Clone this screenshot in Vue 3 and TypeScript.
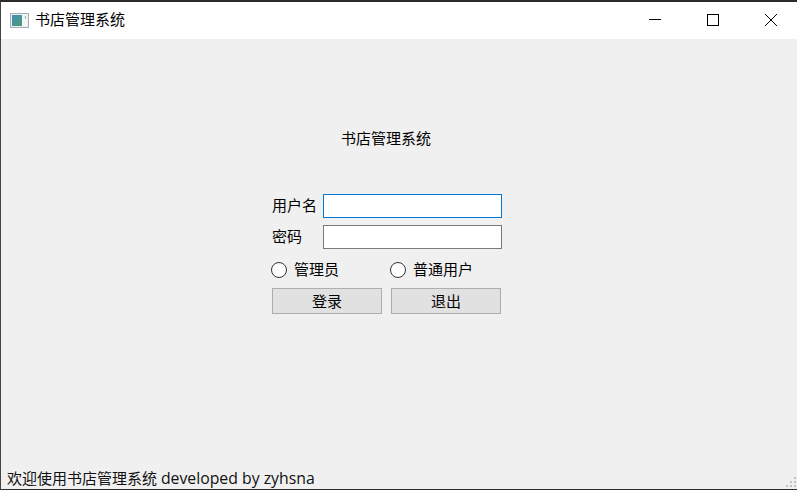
<script setup lang="ts">
const title = '书店管理系统'
</script>

<template>
  <div class="window">
    <header class="titlebar">
      <svg class="app-icon" width="20" height="16" viewBox="0 0 20 16">
        <defs>
          <linearGradient id="pane" x1="0" y1="0" x2="1" y2="1">
            <stop offset="0" stop-color="#3f8fb5" />
            <stop offset="1" stop-color="#4f9a78" />
          </linearGradient>
        </defs>
        <rect x="0.5" y="0.5" width="18" height="14" fill="#eef0f2" stroke="#a9adb3" />
        <rect x="2" y="2" width="10" height="11" fill="url(#pane)" />
        <rect x="12" y="2" width="5" height="11" fill="#f4f6f6" />
        <rect x="15" y="3" width="1" height="3" fill="#7fc0a8" />
      </svg>
      <span class="title">{{ title }}</span>
      <div class="controls">
        <button class="ctl" aria-label="最小化">
          <svg width="12" height="12" viewBox="0 0 12 12"><path d="M0 5.5H12" stroke="#000" fill="none" /></svg>
        </button>
        <button class="ctl" aria-label="最大化">
          <svg width="12" height="12" viewBox="0 0 12 12"><rect x="0.5" y="0.5" width="11" height="11" stroke="#000" fill="none" /></svg>
        </button>
        <button class="ctl" aria-label="关闭">
          <svg width="12" height="12" viewBox="0 0 12 12"><path d="M0 0L12 12M12 0L0 12" stroke="#000" fill="none" /></svg>
        </button>
      </div>
    </header>

    <main class="content">
      <div class="panel">
        <h1 class="heading">{{ title }}</h1>
        <form class="form" @submit.prevent>
          <div class="row">
            <label class="label">用户名</label>
            <input class="input focused" type="text" />
          </div>
          <div class="row row-pw">
            <label class="label">密码</label>
            <input class="input" type="password" />
          </div>
          <div class="radios">
            <label class="radio radio-a"><span class="dot"></span><span class="radio-text">管理员</span></label>
            <label class="radio"><span class="dot"></span><span class="radio-text">普通用户</span></label>
          </div>
          <div class="buttons">
            <button class="btn" type="button">登录</button>
            <button class="btn" type="button">退出</button>
          </div>
        </form>
      </div>
    </main>

    <footer class="status">
      <span>欢迎使用书店管理系统 <span class="latin">developed by zyhsna</span></span>
      <svg class="grip" width="12" height="12" viewBox="0 0 12 12" fill="#c4c4c4">
        <rect x="9" y="0" width="2" height="2" />
        <rect x="5" y="4" width="2" height="2" />
        <rect x="9" y="4" width="2" height="2" />
        <rect x="1" y="8" width="2" height="2" />
        <rect x="5" y="8" width="2" height="2" />
        <rect x="9" y="8" width="2" height="2" />
      </svg>
    </footer>
  </div>
</template>

<style>
html, body { margin: 0; padding: 0; }
</style>

<style scoped>
.window {
  width: 797px;
  height: 490px;
  box-sizing: border-box;
  display: flex;
  flex-direction: column;
  background: #f0f0f0;
  border-top: 2px solid #2b2b2b;
  border-bottom: 1px solid #2b2b2b;
  border-left: 1px solid #444;
  font-family: "Open Sans", "Noto Sans CJK SC", sans-serif;
  font-size: 15px;
  color: #000;
  overflow: hidden;
}
.titlebar {
  height: 37px;
  flex: none;
  display: flex;
  align-items: center;
  background: #fff;
  padding-left: 9px;
}
.app-icon { margin-right: 5px; }
.title { line-height: 35px; margin-bottom: 3px; }
.controls { margin-left: auto; margin-right: -3px; display: flex; height: 100%; flex: none; }
.ctl {
  width: 58px;
  height: 100%;
  padding: 0 0 2px;
  border: 0;
  background: transparent;
  display: flex;
  align-items: center;
  justify-content: center;
}
.content {
  flex: 1;
  display: flex;
  flex-direction: column;
  min-height: 0;
}
.panel { margin: 88px 0 0 270px; width: 232px; }
.heading {
  margin: 0;
  padding-right: 2px;
  font-size: 15px;
  font-weight: 400;
  line-height: 22px;
  text-align: center;
}
.form {
  margin-top: 45px;
  display: flex;
  flex-direction: column;
}
.row { display: flex; align-items: center; height: 24px; }
.row-pw { margin-top: 7px; }
.label {
  width: 52px;
  height: 24px;
  box-sizing: border-box;
  padding: 0 0 2px 1px;
  flex: none;
  white-space: nowrap;
  line-height: 22px;
}
.input {
  width: 179px;
  height: 24px;
  box-sizing: border-box;
  border: 1px solid #7a7a7a;
  background: #fff;
  padding: 0 2px;
  outline: none;
}
.focused { border-color: #0078d7; }
.radios { display: flex; margin-top: 11px; height: 20px; align-items: center; }
.radio { display: flex; align-items: center; line-height: 20px; white-space: nowrap; }
.radio-a { width: 119px; }
.radio-text { margin-bottom: 2px; }
.dot {
  width: 16px;
  height: 16px;
  box-sizing: border-box;
  border: 1px solid #333;
  border-radius: 50%;
  background: #fff;
  margin-right: 7px;
}
.buttons { display: flex; gap: 9px; margin-top: 8px; margin-left: 1px; }
.btn {
  width: 110px;
  height: 26px;
  box-sizing: border-box;
  border: 1px solid #adadad;
  background: #e1e1e1;
  font: inherit;
  color: #000;
  padding: 0 0 2px;
}
.status {
  flex: none;
  height: 22px;
  padding-left: 6px;
  display: flex;
  align-items: center;
  line-height: 22px;
  position: relative;
  color: #111;
}
.latin { font-size: 15.8px; }
.grip { position: absolute; right: 0; bottom: 0; }
</style>
